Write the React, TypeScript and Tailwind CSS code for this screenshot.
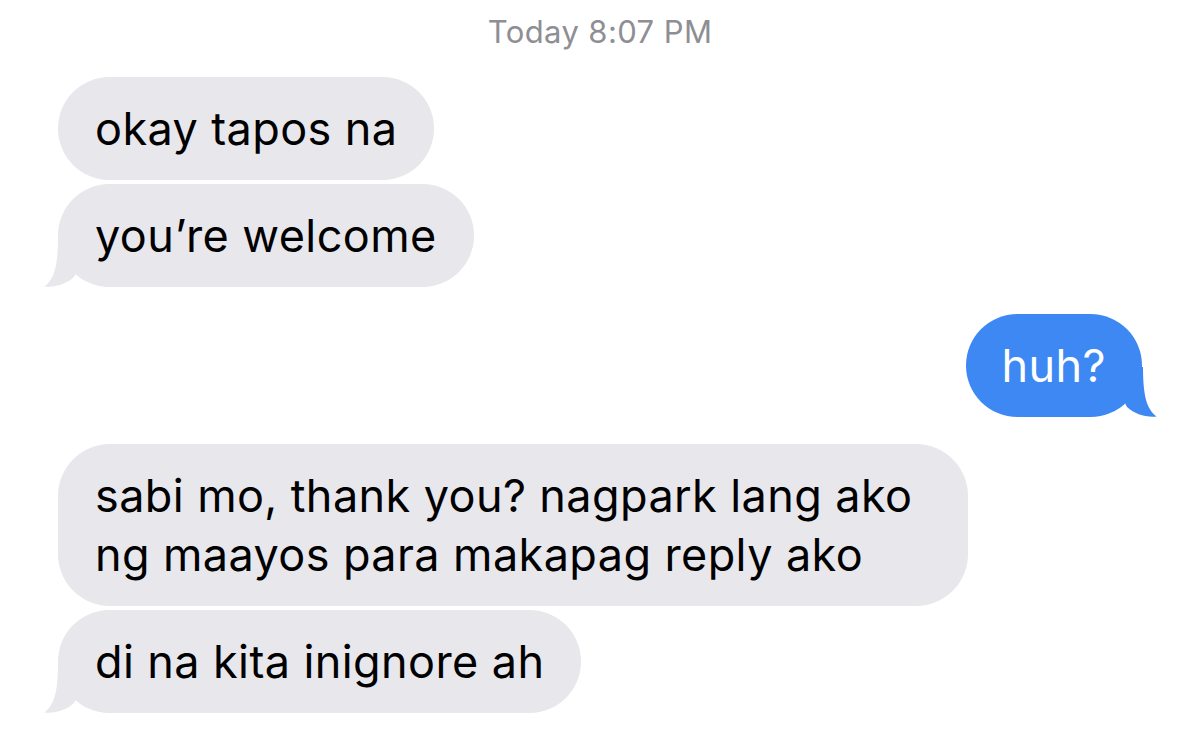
import React from "react";

type Side = "left" | "right";

interface Msg {
  text:  string;
  side:  Side;
  tail?: boolean;
}

// iMessage-style bubble tail, drawn once and mirrored for sent messages
function Tail({ side }: { side: Side }) {
  const cls =
    side === "left"
      ? "absolute bottom-0 -left-[14px] fill-[#e7e7ec]"
      : "absolute bottom-0 -right-[15px] -scale-x-100 fill-[#3e88f4]";
  return (
    <svg width="50" height="50" viewBox="0 0 50 50" className={cls}>
      <path d="M14 0 C14 30 10 42 0.5 49.5 C12 50.5 22 47 30 40 L40 20 L30 0 Z" />
    </svg>
  );
}

function Bubble({ text, side, tail }: Msg) {
  const sent = side === "right";
  return (
    <div
      className={
        sent
          ? "relative w-fit max-w-[910px] self-end rounded-[52px] bg-[#3e88f4] px-[36px] py-[22px] text-[45px] leading-[59px] tracking-[0.4px] text-white"
          : "relative w-fit max-w-[910px] self-start rounded-[52px] bg-[#e7e7ec] px-[37px] py-[22px] text-[45px] leading-[59px] tracking-[0.4px] text-black"
      }
    >
      {tail && <Tail side={side} />}
      <span className="relative">{text}</span>
    </div>
  );
}

const groups: Msg[][] = [
  [
    { text: "okay tapos na", side: "left" },
    { text: "you\u2019re welcome", side: "left", tail: true },
  ],
  [{ text: "huh?", side: "right", tail: true }],
  [
    { text: "sabi mo, thank you? nagpark lang ako ng maayos para makapag reply ako", side: "left" },
    { text: "di na kita inignore ah", side: "left", tail: true },
  ],
];

export default function App() {
  return (
    <div className="min-h-[735px] w-full bg-white px-[58px] pt-[14px] font-['Inter',sans-serif]">
      <p className="text-center text-[31px] leading-[36px] tracking-[0.4px] text-[#8e8e93]">Today 8:07 PM</p>

      <div className="mt-[27px] flex flex-col gap-[27px]">
        {groups.map((g, i) => (
          <div key={i} className="flex flex-col gap-[4px]">
            {g.map((m, j) => (
              <Bubble key={j} {...m} />
            ))}
          </div>
        ))}
      </div>
    </div>
  );
}
